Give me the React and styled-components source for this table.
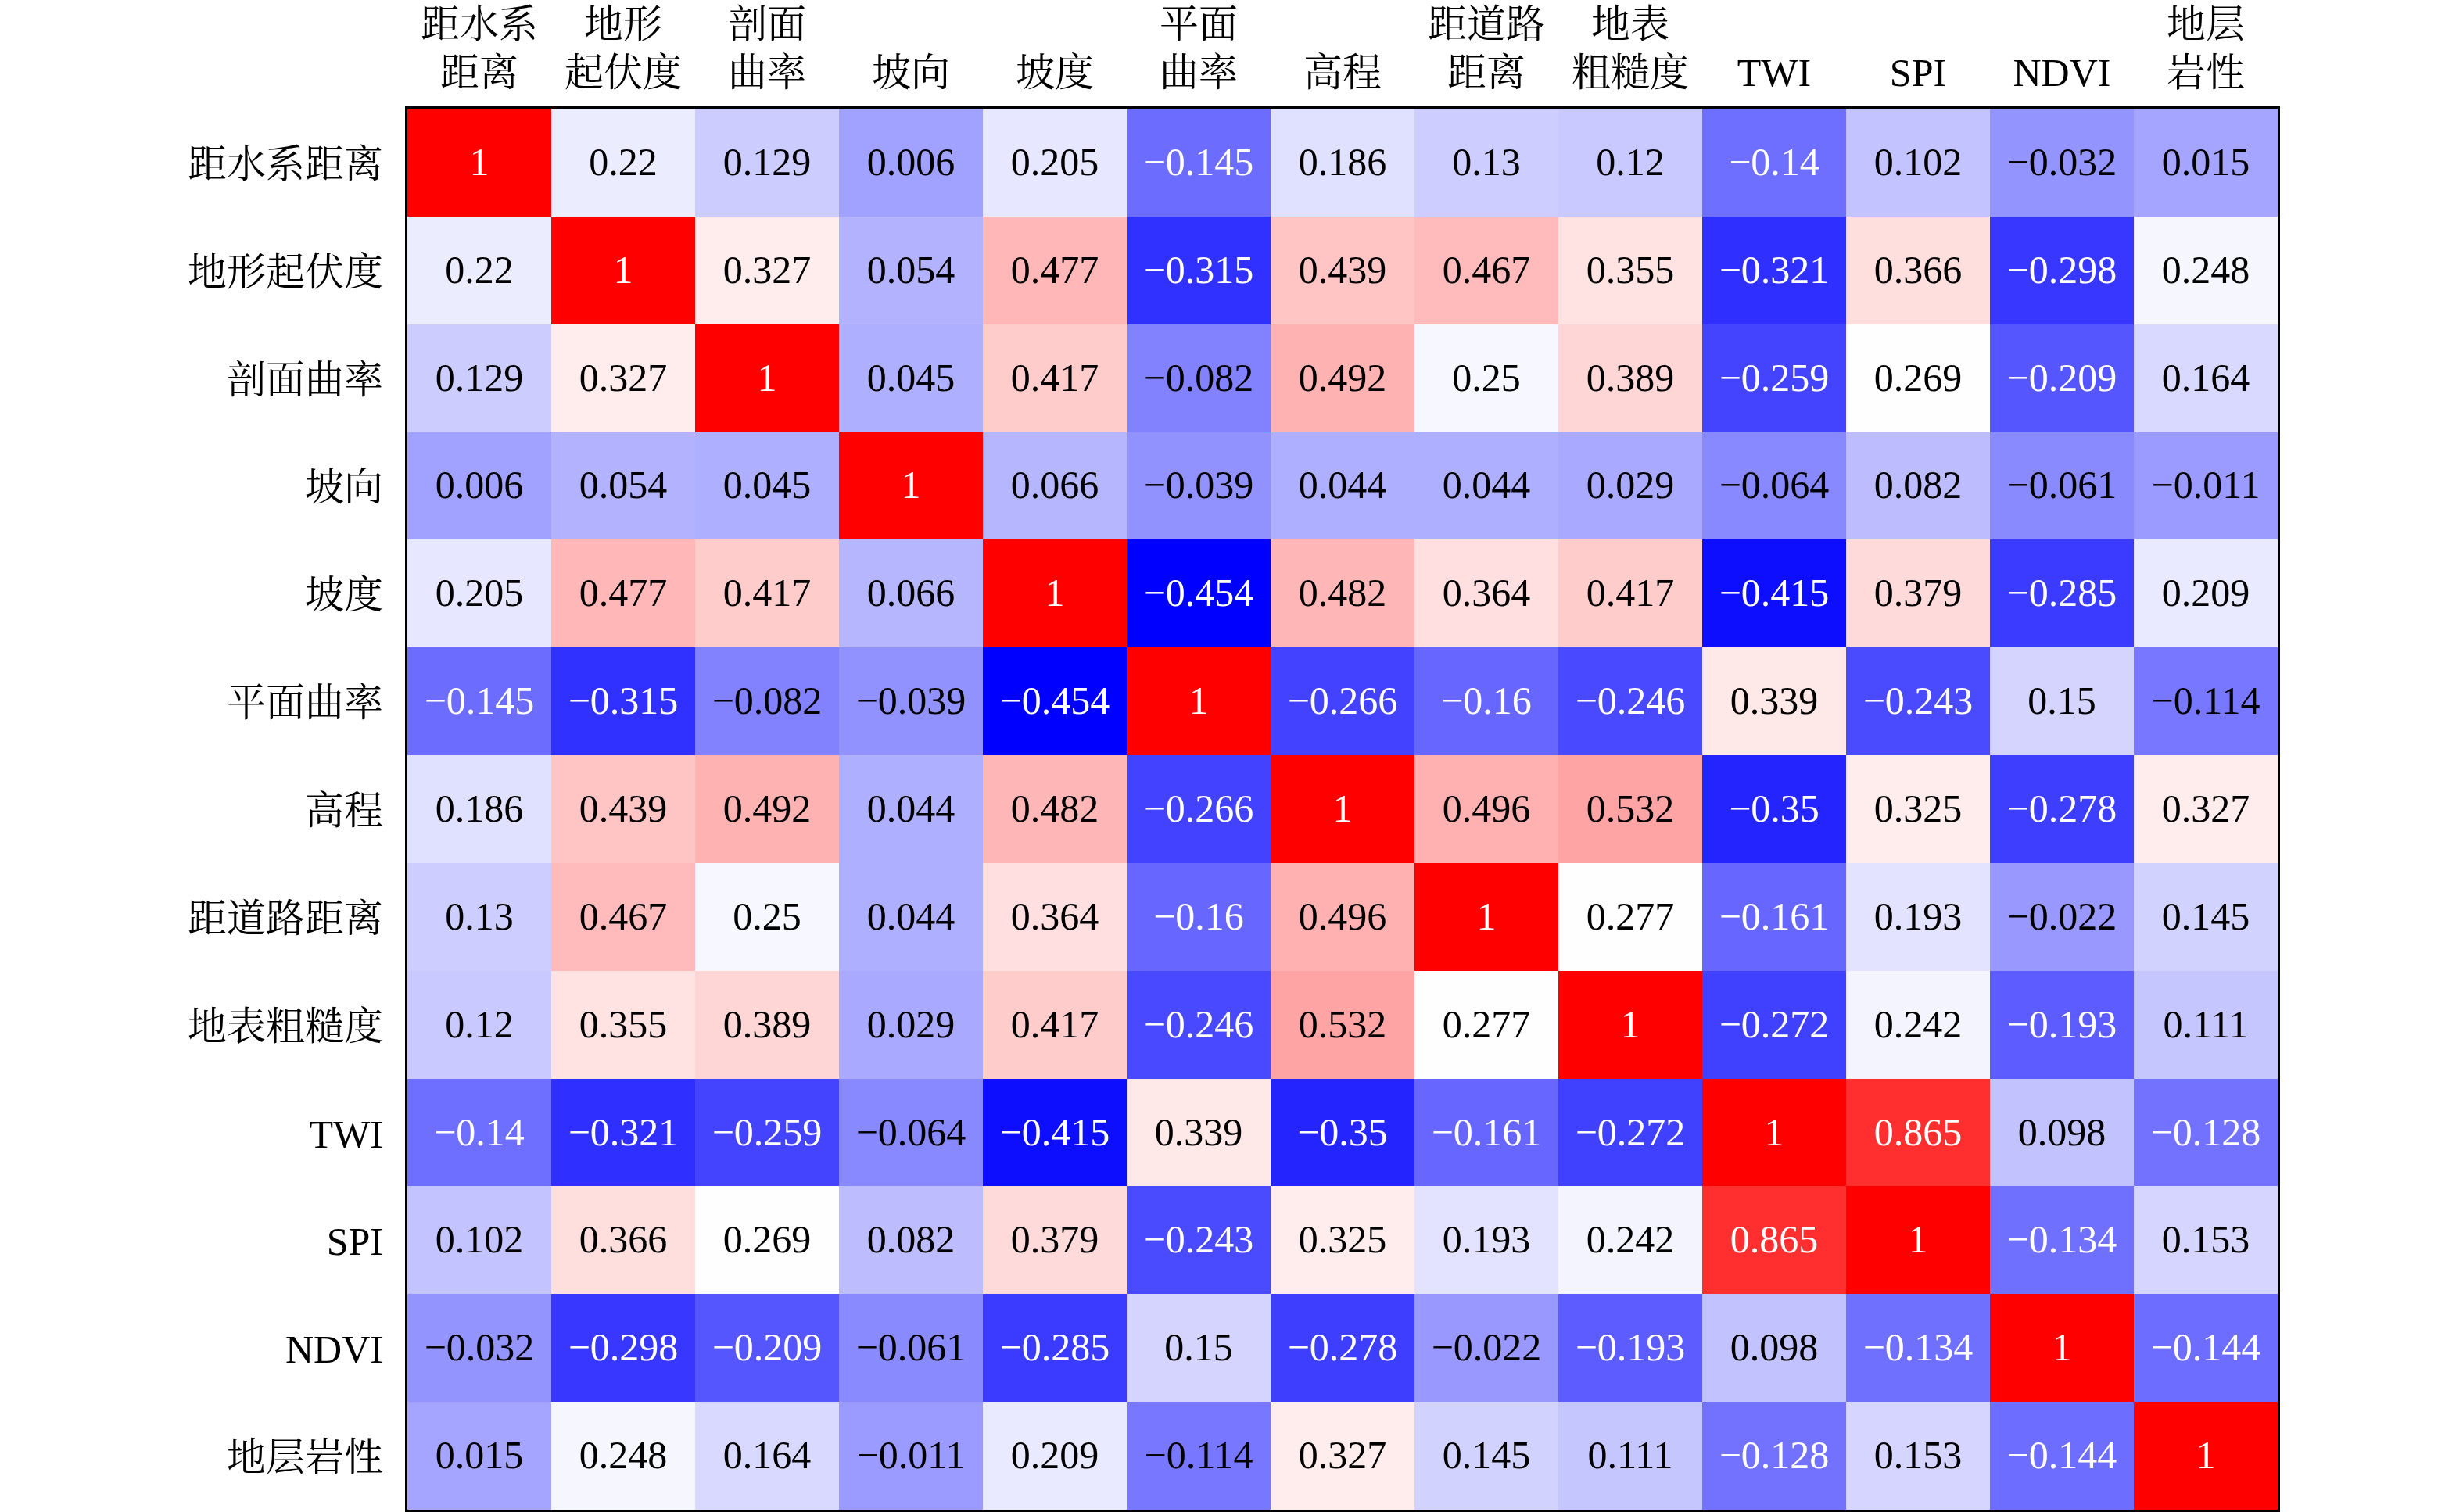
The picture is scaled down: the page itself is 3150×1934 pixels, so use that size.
import React from 'react';
import styled, { createGlobalStyle } from 'styled-components';

const GlobalStyle = createGlobalStyle`
  html, body { margin: 0; padding: 0; background: #ffffff; }
  body { width: 3150px; height: 1934px; overflow: hidden; }
`;

const FONT = `"Liberation Serif", "Noto Serif CJK SC", "Noto Sans CJK SC", serif`;
const COL_W = 184;
const ROW_H = 137.85;
const BORDER = 3;

const Figure = styled.div`
  display: grid;
  grid-template-columns: 518px auto;
  grid-template-rows: 136px auto;
  width: 3150px;
  height: 1934px;
  font-family: ${FONT};
  color: #000;
  background: #fff;
`;

const Corner = styled.div`
  grid-column: 1;
  grid-row: 1;
`;

const ColumnHeader = styled.div`
  grid-column: 2;
  grid-row: 1;
  display: grid;
  grid-template-columns: repeat(13, ${COL_W}px);
  padding-left: ${BORDER}px;
`;

const ColumnLabel = styled.div`
  display: flex;
  flex-direction: column;
  justify-content: flex-end;
  align-items: center;
  padding-bottom: 16px;
  font-size: 50px;
  line-height: 62px;
  white-space: nowrap;
`;

const LabelLine = styled.span`
  display: block;
`;

const RowLabels = styled.div`
  grid-column: 1;
  grid-row: 2;
  display: grid;
  grid-template-rows: repeat(13, ${ROW_H}px);
  padding-top: ${BORDER}px;
`;

const RowLabel = styled.div`
  display: flex;
  align-items: center;
  justify-content: flex-end;
  padding-right: 28px;
  padding-top: 4px;
  font-size: 50px;
  line-height: 62px;
  white-space: nowrap;
`;

const Matrix = styled.div`
  grid-column: 2;
  grid-row: 2;
  justify-self: start;
  align-self: start;
  border: ${BORDER}px solid #000;
  display: grid;
  grid-template-columns: repeat(13, ${COL_W}px);
  grid-template-rows: repeat(13, ${ROW_H}px);
`;

const Cell = styled.div`
  display: flex;
  align-items: center;
  justify-content: center;
  padding-bottom: 2px;
  background: ${(p) => p.$bg};
  color: ${(p) => (p.$light ? '#ffffff' : '#000000')};
  font-size: 50px;
  line-height: 62px;
`;

const ROW_NAMES = [
  '距水系距离', '地形起伏度', '剖面曲率', '坡向', '坡度', '平面曲率', '高程',
  '距道路距离', '地表粗糙度', 'TWI', 'SPI', 'NDVI', '地层岩性',
];

const COL_NAMES = [
  ['距水系', '距离'], ['地形', '起伏度'], ['剖面', '曲率'], ['坡向'], ['坡度'],
  ['平面', '曲率'], ['高程'], ['距道路', '距离'], ['地表', '粗糙度'], ['TWI'],
  ['SPI'], ['NDVI'], ['地层', '岩性'],
];

const DATA = [
  [1, 0.22, 0.129, 0.006, 0.205, -0.145, 0.186, 0.13, 0.12, -0.14, 0.102, -0.032, 0.015],
  [0.22, 1, 0.327, 0.054, 0.477, -0.315, 0.439, 0.467, 0.355, -0.321, 0.366, -0.298, 0.248],
  [0.129, 0.327, 1, 0.045, 0.417, -0.082, 0.492, 0.25, 0.389, -0.259, 0.269, -0.209, 0.164],
  [0.006, 0.054, 0.045, 1, 0.066, -0.039, 0.044, 0.044, 0.029, -0.064, 0.082, -0.061, -0.011],
  [0.205, 0.477, 0.417, 0.066, 1, -0.454, 0.482, 0.364, 0.417, -0.415, 0.379, -0.285, 0.209],
  [-0.145, -0.315, -0.082, -0.039, -0.454, 1, -0.266, -0.16, -0.246, 0.339, -0.243, 0.15, -0.114],
  [0.186, 0.439, 0.492, 0.044, 0.482, -0.266, 1, 0.496, 0.532, -0.35, 0.325, -0.278, 0.327],
  [0.13, 0.467, 0.25, 0.044, 0.364, -0.16, 0.496, 1, 0.277, -0.161, 0.193, -0.022, 0.145],
  [0.12, 0.355, 0.389, 0.029, 0.417, -0.246, 0.532, 0.277, 1, -0.272, 0.242, -0.193, 0.111],
  [-0.14, -0.321, -0.259, -0.064, -0.415, 0.339, -0.35, -0.161, -0.272, 1, 0.865, 0.098, -0.128],
  [0.102, 0.366, 0.269, 0.082, 0.379, -0.243, 0.325, 0.193, 0.242, 0.865, 1, -0.134, 0.153],
  [-0.032, -0.298, -0.209, -0.061, -0.285, 0.15, -0.278, -0.022, -0.193, 0.098, -0.134, 1, -0.144],
  [0.015, 0.248, 0.164, -0.011, 0.209, -0.114, 0.327, 0.145, 0.111, -0.128, 0.153, -0.144, 1],
];

const VMIN = -0.454;
const VMAX = 1;

function bwr(v) {
  const t = Math.min(1, Math.max(0, (v - VMIN) / (VMAX - VMIN)));
  if (t < 0.5) {
    const c = Math.round(2 * t * 255);
    return `rgb(${c}, ${c}, 255)`;
  }
  const c = Math.round(2 * (1 - t) * 255);
  return `rgb(255, ${c}, ${c})`;
}

const fmt = (v) => String(v).replace('-', '\u2212');

export default function App() {
  return (
    <>
      <GlobalStyle />
      <Figure>
        <Corner />
        <ColumnHeader>
          {COL_NAMES.map((lines, i) => (
            <ColumnLabel key={i}>
              {lines.map((l, j) => (
                <LabelLine key={j}>{l}</LabelLine>
              ))}
            </ColumnLabel>
          ))}
        </ColumnHeader>
        <RowLabels>
          {ROW_NAMES.map((n) => (
            <RowLabel key={n}>{n}</RowLabel>
          ))}
        </RowLabels>
        <Matrix>
          {DATA.map((row, r) =>
            row.map((v, c) => (
              <Cell key={`${r}-${c}`} $bg={bwr(v)} $light={v < -0.12 || v > 0.6}>
                {fmt(v)}
              </Cell>
            ))
          )}
        </Matrix>
      </Figure>
    </>
  );
}
